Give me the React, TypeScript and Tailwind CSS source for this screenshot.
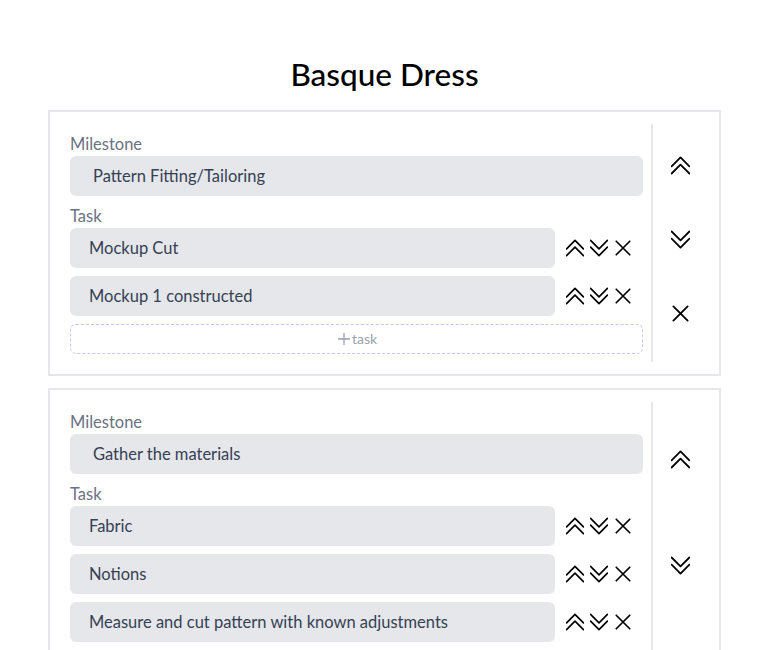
import React from "react";

type Milestone = {
  name: string;
  tasks: string[];
};

const milestones: Milestone[] = [
  {
    name: "Pattern Fitting/Tailoring",
    tasks: ["Mockup Cut", "Mockup 1 constructed"],
  },
  {
    name: "Gather the materials",
    tasks: ["Fabric", "Notions", "Measure and cut pattern with known adjustments", "Cut fabric"],
  },
];

function DoubleUp({ className }: { className?: string }) {
  return (
    <svg viewBox="4 4 16 16" fill="none" stroke="currentColor" strokeWidth={1.5} className={className}>
      <path d="m4.5 12.75 7.5-7.5 7.5 7.5m-15 6 7.5-7.5 7.5 7.5" strokeLinecap="round" strokeLinejoin="round" />
    </svg>
  );
}

function DoubleDown({ className }: { className?: string }) {
  return (
    <svg viewBox="4 4 16 16" fill="none" stroke="currentColor" strokeWidth={1.5} className={className}>
      <path d="m4.5 5.25 7.5 7.5 7.5-7.5m-15 6 7.5 7.5 7.5-7.5" strokeLinecap="round" strokeLinejoin="round" />
    </svg>
  );
}

function Cross({ className }: { className?: string }) {
  return (
    <svg viewBox="4 4 16 16" fill="none" stroke="currentColor" strokeWidth={1.5} className={className}>
      <path d="M6 18 18 6M6 6l12 12" strokeLinecap="round" strokeLinejoin="round" />
    </svg>
  );
}

function TaskRow({ text }: { text: string }) {
  return (
    <div className="flex items-center">
      <div className="flex-1 h-10 flex items-center bg-gray-200 rounded-md pl-[19px] text-gray-700">
        {text}
      </div>
      <div className="w-[88px] flex justify-center items-center text-black">
        <button className="w-6 h-6 flex items-center justify-center">
          <DoubleUp className="w-[18px] h-[18px]" />
        </button>
        <button className="w-6 h-6 flex items-center justify-center">
          <DoubleDown className="w-[18px] h-[18px]" />
        </button>
        <button className="w-6 h-6 flex items-center justify-center">
          <Cross className="w-[18px] h-[18px]" />
        </button>
      </div>
    </div>
  );
}

function MilestoneCard({ milestone }: { milestone: Milestone }) {
  return (
    <div className="border-2 border-gray-200 pl-5 pr-3 py-3 flex">
      <div className="flex-1 flex flex-col pt-2 pb-2 pr-2 border-r-2 border-gray-200">
        <label className="text-gray-500 leading-6">Milestone</label>
        <div className="h-10 flex items-center bg-gray-200 rounded-md pl-[23px] text-gray-700">
          {milestone.name}
        </div>
        <label className="text-gray-500 leading-6 mt-2">Task</label>
        <div className="flex flex-col gap-2">
          {milestone.tasks.map((t) => (
            <TaskRow key={t} text={t} />
          ))}
          <button className="h-[30px] w-full border border-dashed border-[#c3c6f7] rounded-md flex items-center justify-center text-sm text-gray-400">
            <svg viewBox="0 0 16 16" className="w-4 h-4" fill="none" stroke="currentColor" strokeWidth={1.3}>
              <path d="M8 2v12M2 8h12" />
            </svg>
            task
          </button>
        </div>
      </div>
      <div className="w-[54px] flex flex-col justify-around items-center py-2 text-black">
        <button className="pb-[7px]">
          <DoubleUp className="w-[19px] h-[19px]" />
        </button>
        <button className="pb-[7px]">
          <DoubleDown className="w-[19px] h-[19px]" />
        </button>
        <button className="pb-[7px]">
          <Cross className="w-[19px] h-[19px]" />
        </button>
      </div>
    </div>
  );
}

export default function App() {
  return (
    <div
      className="min-h-screen bg-white pt-[56px] pl-[48px] text-[16.5px]"
      style={{ fontFamily: "Lato, 'Liberation Sans', sans-serif" }}
    >
      <div className="w-[673px]">
        <h1 className="text-[31.5px] leading-9 font-medium text-black text-center mb-[18px]">Basque Dress</h1>
        <div className="flex flex-col gap-3">
          {milestones.map((m) => (
            <MilestoneCard key={m.name} milestone={m} />
          ))}
        </div>
      </div>
    </div>
  );
}
